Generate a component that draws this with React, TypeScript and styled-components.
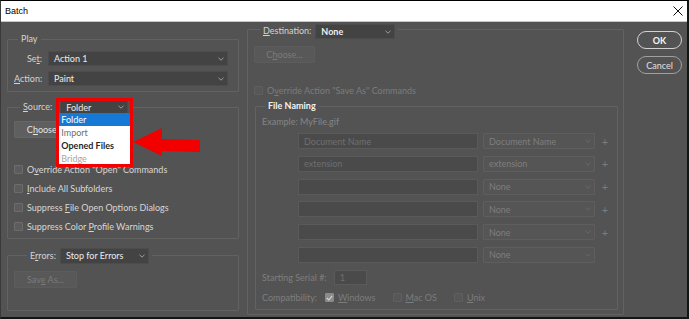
import { Fragment } from 'react';
import styled, { createGlobalStyle } from 'styled-components';

const GlobalStyle = createGlobalStyle`
  * { box-sizing: border-box; }
  html, body { margin: 0; padding: 0; background: #535353; }
  body {
    font-family: Lato, 'Liberation Sans', Arial, sans-serif;
    font-size: 9px;
    color: #d8d8d8;
  }
`;

const Window = styled.div`
  width: 689px;
  height: 319px;
  display: flex;
  flex-direction: column;
  background: #535353;
  border-top: 1px solid #000;
  border-left: 1px solid #3a3a3a;
  border-right: 2px solid #141414;
  border-bottom: 2px solid #141414;
  overflow: hidden;
`;

const TitleBar = styled.div`
  height: 21px;
  flex-shrink: 0;
  display: flex;
  align-items: center;
  justify-content: space-between;
  padding: 0 4px 0 4px;
  background: #fff;
  border-bottom: 1px solid #c6c6c6;
  color: #000;
  font-family: 'Liberation Sans', Arial, sans-serif;
  font-size: 9px;
`;

const Body = styled.div`
  flex: 1;
  display: flex;
  gap: 8px;
  padding: 0 4px 0 6px;
`;

const LeftColumn = styled.div`
  width: 232px;
  display: flex;
  flex-direction: column;
  padding-top: 11px;
`;

const MidColumn = styled.div`
  width: 377px;
  padding-top: 2px;
`;

const RightColumn = styled.div`
  margin-left: 5px;
  width: 45px;
  display: flex;
  flex-direction: column;
  gap: 7px;
  padding-top: 9px;
`;

const Group = styled.fieldset<{ $pad: string; $gap?: number; $inset?: number }>`
  margin: ${(p) => `${p.$gap ?? 0}px 0 0 ${p.$inset ?? 0}px`};
  min-width: 0;
  padding: ${(p) => p.$pad};
  border: 1px solid #626262;
  border-radius: 1px;
`;

const Legend = styled.legend<{ $indent: number; $h?: number }>`
  margin-left: ${(p) => p.$indent}px;
  padding: 0 3px;
  height: ${(p) => (p.$h ? `${p.$h}px` : 'auto')};
  line-height: 12px;
`;

const LegendRow = styled.div<{ $gap: number }>`
  display: flex;
  align-items: flex-start;
  gap: ${(p) => p.$gap}px;
`;

const LegendText = styled.span<{ $bold?: boolean; $pad?: number }>`
  color: ${(p) => (p.$bold ? '#f2f2f2' : '#d4d4d4')};
  font-weight: ${(p) => (p.$bold ? 700 : 400)};
  padding-top: ${(p) => p.$pad ?? 0}px;
  line-height: 12px;
`;

const Mn = styled.u`
  text-underline-offset: 1px;
`;

const FormGrid = styled.div`
  display: grid;
  grid-template-columns: 28px 180px;
  column-gap: 6px;
  row-gap: 5px;
  align-items: center;
`;

const FieldLabel = styled.span`
  text-align: right;
  color: #d4d4d4;
  white-space: nowrap;
`;

const Select = styled.div<{ $w: number; $h: number; $off?: boolean; $strong?: boolean }>`
  width: ${(p) => p.$w}px;
  height: ${(p) => p.$h}px;
  flex-shrink: 0;
  display: flex;
  align-items: center;
  justify-content: space-between;
  padding: 0 3px 0 5px;
  background: ${(p) => (p.$off ? '#555555' : '#434343')};
  border: 1px solid ${(p) => (p.$off ? '#5e5e5e' : '#4c4c4c')};
  border-radius: 1px;
  color: ${(p) => (p.$off ? '#7e7e7e' : '#ececec')};
  font-weight: ${(p) => (p.$strong ? 700 : 400)};
  white-space: nowrap;
  line-height: 1;
`;

const Chevron = ({ off }: { off?: boolean }) => (
  <svg width="6" height="4" viewBox="0 0 6 4">
    <polyline points="0.5,0.8 3,3.2 5.5,0.8" fill="none" stroke={off ? '#6c6c6c' : '#a8a8a8'} strokeWidth="0.9" />
  </svg>
);

const Button = styled.div<{ $w: number; $off?: boolean }>`
  width: ${(p) => p.$w}px;
  height: 17px;
  display: flex;
  align-items: center;
  justify-content: center;
  background: ${(p) => (p.$off ? '#585858' : '#5f5f5f')};
  border: 1px solid ${(p) => (p.$off ? '#5c5c5c' : '#666666')};
  border-radius: 1px;
  color: ${(p) => (p.$off ? '#7b7b7b' : '#e4e4e4')};
  white-space: pre;
`;

const CheckList = styled.div<{ $top: number }>`
  margin-top: ${(p) => p.$top}px;
  display: flex;
  flex-direction: column;
  gap: 7.3px;
`;

const CheckRow = styled.div<{ $off?: boolean; $top?: number }>`
  height: 12px;
  display: flex;
  align-items: center;
  gap: 4px;
  margin-top: ${(p) => p.$top ?? 0}px;
  color: ${(p) => (p.$off ? '#7c7c7c' : '#d6d6d6')};
  white-space: pre;
`;

const Box = styled.span<{ $off?: boolean; $checked?: boolean }>`
  width: 9px;
  height: 9px;
  flex-shrink: 0;
  display: flex;
  align-items: center;
  justify-content: center;
  border-radius: 1px;
  background: ${(p) => (p.$checked ? '#8a8a8a' : p.$off ? '#575757' : '#5c5c5c')};
  border: 1px solid ${(p) => (p.$checked ? '#8a8a8a' : p.$off ? '#5f5f5f' : '#6d6d6d')};
`;

const Anchor = styled.div`
  position: relative;
`;

const Popup = styled.div`
  position: absolute;
  left: -1px;
  top: 13px;
  width: 71px;
  height: 52px;
  display: flex;
  flex-direction: column;
  background: #fff;
  z-index: 2;
`;

type Tone = 'active' | 'muted' | 'strong' | 'faint';

const toneColor: Record<Tone, string> = {
  active: '#ffffff',
  muted: '#6e6e6e',
  strong: '#262626',
  faint: '#a6a6a6',
};

const PopItem = styled.div<{ $tone: Tone }>`
  height: 13px;
  line-height: 13px;
  padding-left: 2px;
  background: ${(p) => (p.$tone === 'active' ? '#1779d6' : 'transparent')};
  color: ${(p) => toneColor[p.$tone]};
  font-weight: ${(p) => (p.$tone === 'strong' ? 700 : 400)};
`;

const Frame = styled.div`
  position: absolute;
  left: -4px;
  top: -2px;
  width: 77px;
  height: 69px;
  border: 3px solid #f20000;
  z-index: 3;
`;

const Arrow = styled.svg`
  position: absolute;
  left: 73px;
  top: 28px;
  z-index: 3;
`;

const Muted = styled.div`
  height: 12px;
  line-height: 12px;
  color: #858585;
`;

const NameGrid = styled.div`
  margin: 5px 0 0 36px;
  display: grid;
  grid-template-columns: 180px 112px 10px;
  grid-auto-rows: 16px;
  column-gap: 5px;
  row-gap: 6.8px;
  align-items: center;
`;

const TextField = styled.div<{ $w: number; $h: number }>`
  width: ${(p) => p.$w}px;
  height: ${(p) => p.$h}px;
  display: flex;
  align-items: center;
  padding-left: 5px;
  background: #4a4a4a;
  border: 1px solid #5a5a5a;
  color: #6f6f6f;
  line-height: 1;
`;

const Plus = styled.span`
  color: #7c7c7c;
  font-size: 11px;
  line-height: 1;
  text-align: center;
`;

const InlineRow = styled.div<{ $top: number; $gap: number }>`
  margin-top: ${(p) => p.$top}px;
  display: flex;
  align-items: center;
  gap: ${(p) => p.$gap}px;
  color: #7e7e7e;
  white-space: nowrap;
`;

const CompatItems = styled.div`
  display: flex;
  gap: 17px;
`;

const DialogButton = styled.div<{ $primary?: boolean }>`
  width: 45px;
  height: 18px;
  display: flex;
  align-items: center;
  justify-content: center;
  border-radius: 9px;
  border: ${(p) => (p.$primary ? '1.5px solid #d2d2d2' : '1px solid #a0a0a0')};
  color: ${(p) => (p.$primary ? '#f4f4f4' : '#e0e0e0')};
  font-weight: ${(p) => (p.$primary ? 700 : 400)};
`;

const namingRows = [
  { field: 'Document Name', pick: 'Document Name', plus: true },
  { field: 'extension', pick: 'extension', plus: true },
  { field: '', pick: 'None', plus: true },
  { field: '', pick: 'None', plus: true },
  { field: '', pick: 'None', plus: true },
  { field: '', pick: 'None', plus: false },
];

export default function App() {
  return (
    <>
      <GlobalStyle />
      <Window>
        <TitleBar>
          <span>Batch</span>
          <svg width="10" height="10" viewBox="0 0 10 10">
            <path d="M0.5 0.5 L9.5 9.5 M9.5 0.5 L0.5 9.5" stroke="#111" strokeWidth="1" />
          </svg>
        </TitleBar>
        <Body>
          <LeftColumn>
            <Group $pad="6px 10px 5px 6px">
              <Legend $indent={4}>
                <LegendText>Play</LegendText>
              </Legend>
              <FormGrid>
                <FieldLabel>
                  Se<Mn>t</Mn>:
                </FieldLabel>
                <Select $w={180} $h={15}>
                  Action 1
                  <Chevron />
                </Select>
                <FieldLabel>
                  <Mn>A</Mn>ction:
                </FieldLabel>
                <Select $w={180} $h={15}>
                  Paint
                  <Chevron />
                </Select>
              </FormGrid>
            </Group>

            <Group $pad="7px 10px 5px 6px" $gap={8}>
              <Legend $indent={6}>
                <LegendRow $gap={8}>
                  <LegendText $pad={1}>
                    <Mn>S</Mn>ource:
                  </LegendText>
                  <Anchor>
                    <Select $w={68} $h={14}>
                      Folder
                      <Chevron />
                    </Select>
                    <Popup>
                      <PopItem $tone="active">Folder</PopItem>
                      <PopItem $tone="muted">Import</PopItem>
                      <PopItem $tone="strong">Opened Files</PopItem>
                      <PopItem $tone="faint">Bridge</PopItem>
                    </Popup>
                    <Frame />
                    <Arrow width="67" height="28" viewBox="0 0 67 28">
                      <polygon points="0,14 29,0 29,11 67,12 67,24 29,23 29,28" fill="#f20000" />
                    </Arrow>
                  </Anchor>
                </LegendRow>
              </Legend>
              <Button $w={62}>
                C<Mn>h</Mn>oose...
              </Button>
              <CheckList $top={25}>
                <CheckRow>
                  <Box />
                  <span>
                    O<Mn>v</Mn>erride Action "Open" Commands
                  </span>
                </CheckRow>
                <CheckRow>
                  <Box />
                  <span>
                    <Mn>I</Mn>nclude All Subfolders
                  </span>
                </CheckRow>
                <CheckRow>
                  <Box />
                  <span>
                    Suppress <Mn>F</Mn>ile Open Options Dialogs
                  </span>
                </CheckRow>
                <CheckRow>
                  <Box />
                  <span>
                    Suppress Color <Mn>P</Mn>rofile Warnings
                  </span>
                </CheckRow>
              </CheckList>
            </Group>

            <Group $pad="7px 10px 22px 6px" $gap={9}>
              <Legend $indent={13}>
                <LegendRow $gap={4}>
                  <LegendText $pad={2}>
                    E<Mn>r</Mn>rors:
                  </LegendText>
                  <Select $w={89} $h={16}>
                    Stop for Errors
                    <Chevron />
                  </Select>
                </LegendRow>
              </Legend>
              <Button $w={63} $off>
                Sav<Mn>e</Mn>{' As...'}
              </Button>
            </Group>
          </LeftColumn>

          <MidColumn>
            <Group $pad="11px 5px 4px 6px">
              <Legend $indent={6} $h={11}>
                <LegendRow $gap={4}>
                  <LegendText $pad={1}>
                    <Mn>D</Mn>estination:
                  </LegendText>
                  <Select $w={80} $h={15} $strong>
                    None
                    <Chevron />
                  </Select>
                </LegendRow>
              </Legend>
              <Button $w={61} $off>
                C<Mn>h</Mn>oose...
              </Button>
              <CheckRow $off $top={21}>
                <Box $off />
                <span>
                  O<Mn>v</Mn>erride Action "Save As" Commands
                </span>
              </CheckRow>
              <Group $pad="4px 6px 5px 6px" $gap={4} $inset={1}>
                <Legend $indent={3}>
                  <LegendText $bold>File Naming</LegendText>
                </Legend>
                <Muted>Example: MyFile.gif</Muted>
                <NameGrid>
                  {namingRows.map((row, i) => (
                    <Fragment key={i}>
                      <TextField $w={180} $h={16}>
                        {row.field}
                      </TextField>
                      <Select $w={112} $h={16} $off>
                        {row.pick}
                        <Chevron off />
                      </Select>
                      <Plus>{row.plus ? '+' : ''}</Plus>
                    </Fragment>
                  ))}
                </NameGrid>
                <InlineRow $top={7} $gap={7}>
                  <span>Starting Serial #:</span>
                  <TextField $w={33} $h={15}>
                    1
                  </TextField>
                </InlineRow>
                <InlineRow $top={7} $gap={8}>
                  <span>Compatibility:</span>
                  <CompatItems>
                    <CheckRow $off>
                      <Box $off $checked>
                        <svg width="7" height="6" viewBox="0 0 7 6">
                          <polyline points="0.8,3 2.8,5 6.2,0.8" fill="none" stroke="#d8d8d8" strokeWidth="1.1" />
                        </svg>
                      </Box>
                      <span>
                        <Mn>W</Mn>indows
                      </span>
                    </CheckRow>
                    <CheckRow $off>
                      <Box $off />
                      <span>
                        <Mn>M</Mn>ac OS
                      </span>
                    </CheckRow>
                    <CheckRow $off>
                      <Box $off />
                      <span>
                        <Mn>U</Mn>nix
                      </span>
                    </CheckRow>
                  </CompatItems>
                </InlineRow>
              </Group>
            </Group>
          </MidColumn>

          <RightColumn>
            <DialogButton $primary>OK</DialogButton>
            <DialogButton>Cancel</DialogButton>
          </RightColumn>
        </Body>
      </Window>
    </>
  );
}
